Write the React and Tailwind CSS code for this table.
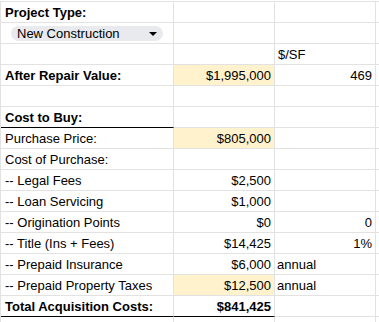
import React from "react";

const G = "border-[#e2e2e2]";

function Cell({ children, align = "left", bold, yellow, black, padL = "pl-[4px]" }) {
  const cls = [
    "h-[21px] border-r border-b overflow-hidden whitespace-nowrap text-[13px] leading-[21px] text-black",
    black ? "border-r-[#e2e2e2] border-b-black" : G,
    align === "right" ? "text-right pr-[3px]" : padL,
    bold ? "font-bold" : "font-normal",
    yellow ? "bg-[#fff2cc]" : "bg-white",
  ].join(" ");
  return <div className={cls}>{children}</div>;
}

function Chip() {
  return (
    <div className={"h-[21px] border-r border-b bg-white flex items-start pl-[10px] pt-[3px] " + G}>
      <div className="w-[152px] h-[15px] rounded-full bg-[#e8eaed] flex items-center justify-between pl-[6px] pr-[6px]">
        <span className="text-[13px] leading-[15px] text-black">New Construction</span>
        <svg width="8" height="4" viewBox="0 0 8 4" className="mt-px">
          <path d="M0 0 L8 0 L4 4 Z" fill="#000" />
        </svg>
      </div>
    </div>
  );
}

const rows = [
  [{ t: "Project Type:", bold: true }, {}, {}],
  ["chip", {}, {}],
  [{}, {}, { t: "$/SF", padL: "pl-[3px]" }],
  [{ t: "After Repair Value:", bold: true }, { t: "$1,995,000", align: "right", yellow: true }, { t: "469", align: "right" }],
  [{}, {}, {}],
  [{ t: "Cost to Buy:", bold: true, black: true }, {}, {}],
  [{ t: "Purchase Price:" }, { t: "$805,000", align: "right", yellow: true }, {}],
  [{ t: "Cost of Purchase:" }, {}, {}],
  [{ t: "-- Legal Fees" }, { t: "$2,500", align: "right" }, {}],
  [{ t: "-- Loan Servicing" }, { t: "$1,000", align: "right" }, {}],
  [{ t: "-- Origination Points" }, { t: "$0", align: "right" }, { t: "0", align: "right" }],
  [{ t: "-- Title (Ins + Fees)" }, { t: "$14,425", align: "right" }, { t: "1%", align: "right" }],
  [{ t: "-- Prepaid Insurance" }, { t: "$6,000", align: "right" }, { t: "annual", padL: "pl-[2px]" }],
  [{ t: "-- Prepaid Property Taxes" }, { t: "$12,500", align: "right", yellow: true }, { t: "annual", padL: "pl-[2px]" }],
  [{ t: "Total Acquisition Costs:", bold: true, black: true }, { t: "$841,425", align: "right", bold: true, black: true }, {}],
  [{}, {}, {}],
];

export default function App() {
  return (
    <div
      className="w-[379px] h-[322px] overflow-hidden bg-white pt-px"
      style={{ fontFamily: '"Liberation Sans", Arial, sans-serif' }}
    >
      <div className={"grid grid-cols-[173px_101px_101px_101px] border-t border-l w-max " + G}>
        {rows.map((r, i) => (
          <React.Fragment key={i}>
            {r[0] === "chip" ? <Chip /> : <Cell {...r[0]}>{r[0].t}</Cell>}
            <Cell {...r[1]}>{r[1].t}</Cell>
            <Cell {...r[2]}>{r[2].t}</Cell>
            <Cell />
          </React.Fragment>
        ))}
      </div>
    </div>
  );
}
